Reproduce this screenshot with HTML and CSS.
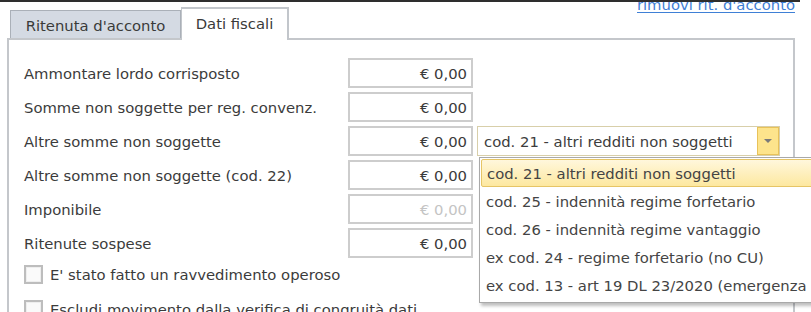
FILE: index.html
```html
<!DOCTYPE html>
<html lang="it">
<head>
<meta charset="utf-8">
<link rel="stylesheet" href="styles.css">
</head>
<body>
<div class="header">
  <div class="tabs">
    <div class="tab">Ritenuta d'acconto</div>
    <div class="tab active">Dati fiscali</div>
  </div>
  <div class="linkwrap"><a class="link" href="#">rimuovi rit. d'acconto</a></div>
</div>
<div class="panel">
  <div class="row"><div class="label">Ammontare lordo corrisposto</div><div class="amount">€ 0,00</div></div>
  <div class="row"><div class="label">Somme non soggette per reg. convenz.</div><div class="amount">€ 0,00</div></div>
  <div class="row"><div class="label">Altre somme non soggette</div><div class="amount">€ 0,00</div>
    <div class="combo">
      <div class="combo-text">cod. 21 - altri redditi non soggetti</div>
      <div class="combo-btn"><span class="arrow"></span></div>
      <div class="menu">
        <div class="item selected">cod. 21 - altri redditi non soggetti</div>
        <div class="item">cod. 25 - indennità regime forfetario</div>
        <div class="item">cod. 26 - indennità regime vantaggio</div>
        <div class="item">ex cod. 24 - regime forfetario (no CU)</div>
        <div class="item">ex cod. 13 - art 19 DL 23/2020 (emergenza COVID-19)</div>
      </div>
    </div>
  </div>
  <div class="row"><div class="label">Altre somme non soggette (cod. 22)</div><div class="amount">€ 0,00</div></div>
  <div class="row"><div class="label">Imponibile</div><div class="amount disabled">€ 0,00</div></div>
  <div class="row"><div class="label">Ritenute sospese</div><div class="amount">€ 0,00</div></div>
  <div class="check-row"><span class="checkbox"></span><span class="check-label">E' stato fatto un ravvedimento operoso</span></div>
  <div class="check-row"><span class="checkbox"></span><span class="check-label">Escludi movimento dalla verifica di congruità dati</span></div>
</div>
</body>
</html>
```
FILE: styles.css
```css
html, body {
  margin: 0;
  padding: 0;
  overflow: hidden;
  background: #ffffff;
}
body {
  width: 811px;
  height: 312px;
  font-family: "DejaVu Sans", sans-serif;
  font-size: 14.8px;
  color: #3b3b3b;
}
.header {
  box-sizing: border-box;
  width: 800px;
  height: 38px;
  border-top: 2px solid #2e2e2e;
  display: flex;
  justify-content: space-between;
  align-items: flex-start;
  padding: 0 5px 0 10px;
}
.tabs {
  align-self: flex-end;
  display: flex;
  align-items: flex-end;
  position: relative;
  z-index: 2;
}
.tab {
  box-sizing: border-box;
  height: 28px;
  width: 171px;
  background: #d4dae3;
  border: 1px solid #aab0b8;
  border-bottom: none;
  display: flex;
  align-items: center;
  justify-content: center;
  color: #3a3a3a;
  padding-top: 1px;
  white-space: nowrap;
}
.tab.active {
  width: 108px;
  height: 33px;
  background: #ffffff;
  border-color: #c2c6cb;
  border-width: 2px 2px 0 2px;
  border-left-width: 1px;
  margin-bottom: -2px;
  padding-bottom: 4px;
}
.linkwrap {
  height: 14px;
  overflow: hidden;
}
.link {
  display: block;
  margin-top: -5px;
  line-height: 16px;
  color: #3f80d6;
  text-decoration: underline;
  text-underline-offset: 2px;
  font-size: 14.8px;
  white-space: nowrap;
}
.panel {
  margin-left: 7px;
  width: 788px;
  height: 274px;
  box-sizing: border-box;
  border: 2px solid #c4c7cb;
  border-bottom: none;
  padding: 18px 0 0 15px;
}
.row {
  display: flex;
  align-items: center;
  height: 30px;
  margin-bottom: 4px;
}
.label {
  width: 324px;
  flex: none;
  white-space: nowrap;
}
.amount {
  box-sizing: border-box;
  width: 125px;
  height: 30px;
  border: 2px solid #cdcdcd;
  display: flex;
  align-items: center;
  justify-content: flex-end;
  padding-right: 4px;
  color: #3a3a3a;
}
.amount.disabled {
  color: #c4c4c4;
}
.combo {
  position: relative;
  box-sizing: border-box;
  margin-left: 4px;
  width: 303px;
  height: 30px;
  border: 1px solid #d8cfaa;
  display: flex;
  align-items: stretch;
  background: #fff;
}
.combo-text {
  flex: 1;
  display: flex;
  align-items: center;
  padding-left: 6px;
  color: #3d3d3d;
  white-space: nowrap;
}
.combo-btn {
  width: 22px;
  box-sizing: border-box;
  background: #fde48c;
  border: 1px solid #e8c25a;
  display: flex;
  align-items: center;
  justify-content: center;
}
.arrow {
  width: 0;
  height: 0;
  border-left: 4px solid transparent;
  border-right: 4px solid transparent;
  border-top: 4px solid #7a7a7a;
}
.menu {
  position: absolute;
  left: 1px;
  top: 30px;
  width: 380px;
  height: 146px;
  box-sizing: border-box;
  background: #ffffff;
  border: 1px solid #a9a9a9;
  box-shadow: 2px 3px 3px rgba(0, 0, 0, 0.25);
  padding-top: 1px;
  z-index: 3;
}
.item {
  height: 28px;
  box-sizing: border-box;
  display: flex;
  align-items: center;
  padding-left: 6px;
  color: #444444;
  white-space: nowrap;
}
.item.selected {
  margin: 0 1px;
  padding-left: 5px;
  border: 1px solid #e6c566;
  border-radius: 2px;
  background: linear-gradient(#fff7dc, #fde8a0);
}
.check-row {
  display: flex;
  align-items: center;
  height: 19px;
  margin-top: 7px;
  margin-bottom: 16px;
}
.check-row + .check-row {
  margin-top: 0;
}
.checkbox {
  box-sizing: border-box;
  width: 19px;
  height: 19px;
  border: 2px solid #bdbdbd;
  box-shadow: inset 0 0 0 1px #eeeeee;
  background: #fafafa;
  flex: none;
}
.check-label {
  margin-left: 7px;
  color: #3b3b3b;
  white-space: nowrap;
}
```
